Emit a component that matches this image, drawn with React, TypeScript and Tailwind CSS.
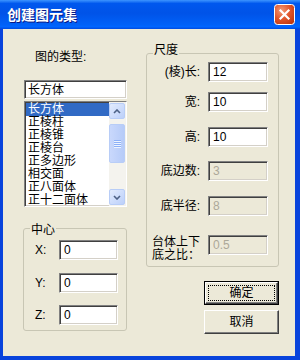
const FONT = "font-['Liberation_Sans','Noto_Sans_CJK_SC',sans-serif]"

const SUNKEN =
  'border border-t-[#808080] border-l-[#808080] border-b-white border-r-white shadow-[inset_1px_1px_0_#404040,inset_-1px_-1px_0_#d4d0c8]'

type FieldProps = {
  value: string
  disabled?: boolean
  className?: string
}

function Field({ value, disabled, className = '' }: FieldProps) {
  return (
    <div
      className={`flex h-[20px] items-center pl-[4px] ${SUNKEN} ${
        disabled ? 'bg-[#ece9d8] text-[#aca899]' : 'bg-white text-black'
      } ${className}`}
    >
      {value}
    </div>
  )
}

type GroupBoxProps = {
  label: string
  labelTop: string
  className?: string
  children: React.ReactNode
}

function GroupBox({ label, labelTop, className = '', children }: GroupBoxProps) {
  return (
    <div className={`relative rounded-[3px] border border-[#c8c6b4] ${className}`}>
      <span className={`absolute left-[6px] bg-[#ece9d8] px-[1px] leading-[14px] ${labelTop}`}>
        {label}
      </span>
      {children}
    </div>
  )
}

function Chevron({ up }: { up?: boolean }) {
  return (
    <svg width="8" height="5" viewBox="0 0 8 5">
      <polyline
        points={up ? '1,4 4,1 7,4' : '1,1 4,4 7,1'}
        fill="none"
        stroke="#4d6185"
        strokeWidth="1.6"
      />
    </svg>
  )
}

function ScrollButton({ up }: { up?: boolean }) {
  return (
    <div className="flex h-[16px] items-center justify-center rounded-[2px] border border-[#b8cdf7] bg-[linear-gradient(135deg,#e2ebfd,#bcd0fa)]">
      <Chevron up={up} />
    </div>
  )
}

function CloseButton() {
  return (
    <svg width="21" height="21" viewBox="0 0 21 21">
      <defs>
        <radialGradient id="closeFill" cx="35%" cy="30%" r="80%">
          <stop offset="0%" stopColor="#f39a76" />
          <stop offset="55%" stopColor="#e0542a" />
          <stop offset="100%" stopColor="#c03810" />
        </radialGradient>
      </defs>
      <rect x="0.5" y="0.5" width="20" height="20" rx="3" fill="url(#closeFill)" stroke="#ffffff" />
      <path d="M6.5 6.5 L14.5 14.5 M14.5 6.5 L6.5 14.5" stroke="#ffffff" strokeWidth="2.2" strokeLinecap="square" />
    </svg>
  )
}

function ListBox() {
  const items = ['长方体', '正棱柱', '正棱锥', '正棱台', '正多边形', '相交面', '正八面体', '正十二面体']
  return (
    <div className={`mt-[2px] flex h-[106px] overflow-hidden bg-white ${SUNKEN}`}>
      <div className="flex-1 pt-[1px] pl-[1px]">
        {items.map((item, i) => (
          <div
            key={item}
            className={`h-[13px] pl-[2px] leading-[13px] ${i === 0 ? 'bg-[#316ac5] text-white' : 'text-black'}`}
          >
            {item}
          </div>
        ))}
      </div>
      <div className="flex w-[17px] flex-col bg-[#f4f3ee] py-[1px] pr-[1px]">
        <ScrollButton up />
        <div className="flex-1 pt-[5px]">
          <div className="flex h-[39px] flex-col items-center justify-center gap-[1px] rounded-[2px] border border-[#b8cdf7] bg-[linear-gradient(90deg,#c9d8fc,#b6cbf8)]">
            {[0, 1, 2, 3].map((n) => (
              <div key={n} className="h-[1px] w-[7px] bg-[#8cb0f8] shadow-[0_1px_0_#eef4fe]" />
            ))}
          </div>
        </div>
        <ScrollButton />
      </div>
    </div>
  )
}

function SizeRow({ label, value, disabled, className = '' }: { label: string; value: string; disabled?: boolean; className?: string }) {
  return (
    <div className={`flex h-[20px] items-center ${className}`}>
      <span className="w-[53px] text-right">{label}</span>
      <Field value={value} disabled={disabled} className="ml-[8px] w-[60px]" />
    </div>
  )
}

function CoordRow({ label, className = '' }: { label: string; className?: string }) {
  return (
    <div className={`flex h-[20px] items-center ${className}`}>
      <span className="w-[24px]">{label}</span>
      <Field value="0" className="w-[59px]" />
    </div>
  )
}

export default function App() {
  return (
    <div className={`flex h-[360px] w-[300px] flex-col bg-[#0843dc] text-[12px] leading-[14px] text-black ${FONT}`}>
      <div className="flex h-[29px] items-center bg-[linear-gradient(180deg,#3d95ff,#0058ee_12%,#0053e8_45%,#0061f8_85%,#0066ff_92%,#004adf)] pl-[7px] pr-[5px]">
        <span className="flex-1 text-[14px] font-bold text-white [text-shadow:1px_1px_0_#0a1883]">
          创建图元集
        </span>
        <CloseButton />
      </div>

      <div className="mb-[4px] ml-[3px] mr-[5px] flex flex-1 bg-[#ece9d8]">
        <div className="ml-[21px] flex w-[103px] flex-col">
          <div className="mt-[21px] pl-[11px]">图的类型:</div>
          <div className={`mt-[16px] flex h-[19px] items-center bg-white pl-[3px] ${SUNKEN}`}>长方体</div>
          <ListBox />
          <GroupBox label="中心" labelTop="-top-[6px]" className="-ml-[1px] mt-[21px] h-[103px] w-[104px] pl-[11px] pt-[11px]">
            <CoordRow label="X:" />
            <CoordRow label="Y:" className="mt-[13px]" />
            <CoordRow label="Z:" className="mt-[12px]" />
          </GroupBox>
        </div>

        <div className="ml-[19px] flex w-[133px] flex-col">
          <GroupBox label="尺度" labelTop="-top-[11px]" className="mt-[24px] h-[214px] pt-[8px]">
            <SizeRow label="(棱)长:" value="12" />
            <SizeRow label="宽:" value="10" className="mt-[10px]" />
            <SizeRow label="高:" value="10" className="mt-[15px]" />
            <SizeRow label="底边数:" value="3" disabled className="mt-[14px]" />
            <SizeRow label="底半径:" value="8" disabled className="mt-[15px]" />
            <div className="mt-[19px] flex items-start">
              <span className="w-[53px] pl-[5px] pt-[1px] leading-[13px]">
                台体上下
                <br />
                底之比：
              </span>
              <Field value="0.5" disabled className="ml-[8px] w-[60px]" />
            </div>
          </GroupBox>

          <button className="ml-auto mt-[14px] h-[24px] w-[75px] border border-black p-0">
            <div className="flex h-full w-full items-center justify-center border border-t-white border-l-white border-b-[#404040] border-r-[#404040] bg-[#ece9d8] shadow-[inset_-1px_-1px_0_#808080]">
              <div className="flex h-[16px] w-[67px] items-center justify-center border border-dotted border-black">
                确定
              </div>
            </div>
          </button>
          <button className="ml-auto mt-[5px] flex h-[24px] w-[75px] items-center justify-center border border-t-white border-l-white border-b-[#404040] border-r-[#404040] bg-[#ece9d8] shadow-[inset_-1px_-1px_0_#808080]">
            取消
          </button>
        </div>
      </div>
    </div>
  )
}
